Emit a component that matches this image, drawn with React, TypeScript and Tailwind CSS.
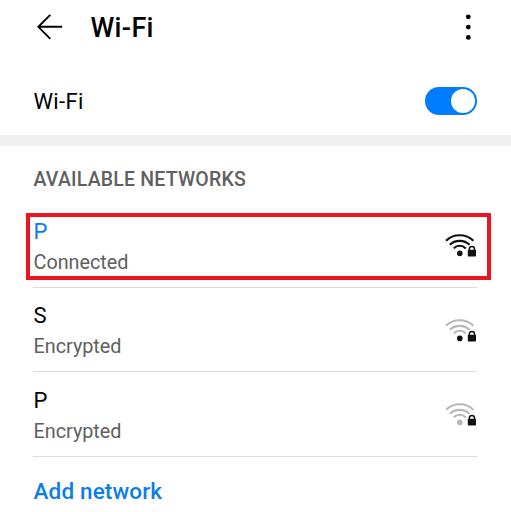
import React from 'react';

type Network = { name: string; status: string; arcs: string; dot: string; connected?: boolean };

const networks: Network[] = [
  { name: 'P', status: 'Connected', arcs: '#111111', dot: '#111111', connected: true },
  { name: 'S', status: 'Encrypted', arcs: '#b8b8b8', dot: '#111111' },
  { name: 'P', status: 'Encrypted', arcs: '#b8b8b8', dot: '#b8b8b8' },
];

function SignalIcon({ arcs, dot }: { arcs: string; dot: string }) {
  return (
    <svg className="h-6 w-8 shrink-0" viewBox="0 0 32 24" fill="none">
      <g stroke={arcs} strokeWidth="2.1">
        <path d="M1.1 7.8C8.2 0.4 21 0.4 28.4 7.8" />
        <path d="M4.8 11.8C9.9 6.5 19.3 6.5 24.6 11.8" />
        <path d="M8.7 15.4C11.9 11.9 17.4 11.9 20.8 15.4" />
      </g>
      <circle cx="14.8" cy="20.4" r="2.8" fill={dot} />
      <path d="M24.3 18V16.2a2.6 2.6 0 0 1 5.2 0V18" stroke="#111" strokeWidth="1.5" />
      <rect x="22.8" y="16.7" width="8.2" height="6.8" rx="0.8" fill="#111" />
    </svg>
  );
}

export default function App() {
  return (
    <main className="flex h-[512px] w-[511px] flex-col overflow-hidden bg-white font-['Roboto',sans-serif] text-black">
      <header className="flex h-[56px] shrink-0 items-center pr-[34px] pl-[37px]">
        <svg className="-mt-[2px] h-[26px] w-[26px]" viewBox="0 0 26 26" fill="none" stroke="#000" strokeWidth="1.9">
          <path d="M13.3 .8L1.3 12.8L13.3 24.8M1.3 12.8H25.2" />
        </svg>
        <h1 className="ml-[27.5px] pt-[1px] text-[27px] font-medium tracking-[0.35px]">Wi-Fi</h1>
        <svg className="ml-auto h-[28px] w-[18px]" viewBox="0 0 18 28">
          <circle cx="9.3" cy="2.8" r="2.4" />
          <circle cx="9.3" cy="13.1" r="2.4" />
          <circle cx="9.3" cy="23.4" r="2.4" />
        </svg>
      </header>
      <section className="flex h-[79px] shrink-0 items-center justify-between pr-[34px] pl-[33.5px]">
        <span className="pt-[11px] text-[22px] tracking-[0.35px]">Wi-Fi</span>
        <button className="mt-[11px] flex h-[28px] w-[52px] items-center justify-end rounded-full bg-[#007dff] pr-[2.5px]">
          <span className="h-[24px] w-[24px] rounded-full bg-white" />
        </button>
      </section>
      <div className="h-[11px] shrink-0 bg-[#f0f0f0]" />
      <h2 className="h-[57px] shrink-0 pl-[33.5px] text-[19.5px] leading-[68px] font-medium tracking-[0.2px] text-[#606060]">AVAILABLE NETWORKS</h2>
      <ul className="relative shrink-0 pr-[34px] pl-[33px]">
        {networks.map((n, i) => (
          <li key={i} className="flex h-[84.5px] items-start justify-between border-b border-[#dcdcdc]">
            <div className="flex flex-col pt-[13.8px] pl-[0.5px]">
              <span className={`text-[22px] leading-[30px] ${n.connected ? 'text-[#0a7cec]' : 'text-black'}`}>{n.name}</span>
              <span className="text-[19.8px] leading-[32px] text-[#606060]">{n.status}</span>
            </div>
            <div className="mt-[30px]">
              <SignalIcon arcs={n.arcs} dot={n.dot} />
            </div>
          </li>
        ))}
        <li aria-hidden="true" className="absolute top-[10px] left-[26px] h-[67px] w-[465px] border-[4px] border-[#ec1420]" />
      </ul>
      <button className="pl-[33.5px] text-left text-[22.5px] leading-[68px] font-medium tracking-[0.15px] text-[#0a7cec]">Add network</button>
    </main>
  );
}
